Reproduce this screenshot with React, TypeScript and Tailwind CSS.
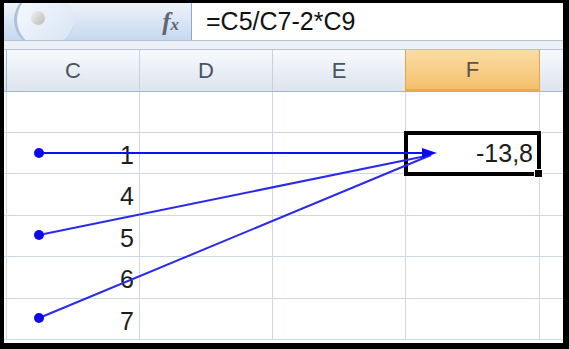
import React from 'react'

const rows = [
  { h: 'h-[41px]', c: '', f: '' },
  { h: 'h-[41px]', c: '1', f: '-13,8' },
  { h: 'h-[42px]', c: '4', f: '' },
  { h: 'h-[41px]', c: '5', f: '' },
  { h: 'h-[42px]', c: '6', f: '' },
  { h: 'h-[41px]', c: '7', f: '' },
]

function Arrows() {
  // trace precedents: all arrows end at one head inside F2
  const tip = { x: 433, y: 150 }
  const from = [
    { x: 35, y: 150 },
    { x: 35, y: 232 },
    { x: 35, y: 315 },
  ]
  return (
    <svg className="absolute left-0 top-0 pointer-events-none" width="559" height="340">
      {from.map((p, i) => (
        <g key={i}>
          <line
            x1={p.x}
            y1={p.y}
            x2={tip.x - 6}
            y2={tip.y + (i === 0 ? 0 : 2)}
            stroke={i === 0 ? '#1010f0' : '#2a2aee'}
            strokeWidth="2"
          />
          <circle cx={p.x} cy={p.y} r="5" fill="#0a0af0" />
        </g>
      ))}
      <polygon points={`${tip.x},${tip.y} ${tip.x - 15},${tip.y - 5} ${tip.x - 15},${tip.y + 5}`} fill="#0a0af0" />
    </svg>
  )
}

export default function App() {
  return (
    <div className="w-[569px] h-[349px] bg-black pt-[3px] pl-[4px] pr-[6px] pb-[6px]">
      <div className="relative w-full h-full bg-white flex flex-col overflow-hidden font-['Liberation_Sans',Arial,sans-serif]">
        {/* formula bar */}
        <div className="h-[37px] flex shrink-0">
          <div className="relative w-[188px] overflow-hidden bg-gradient-to-b from-[#eef3fa] to-[#c6d8ef] border-r border-[#8fa8c8] flex items-center justify-end pr-[12px]">
            <div className="absolute left-[10px] top-[-10px] w-[60px] h-[54px] rounded-full border-l-[3px] border-b border-[#aebfd6] bg-gradient-to-br from-[#f8fbff] to-[#d6e3f3]" />
            <div className="absolute left-[27px] top-[8px] w-[14px] h-[14px] rounded-full bg-gradient-to-br from-[#f2f2f2] to-[#b9b9b9]" />
            <span className="font-['Liberation_Serif',serif] italic font-bold text-[#5f6672] text-[25px] leading-none">
              f<span className="text-[17px]">x</span>
            </span>
          </div>
          <div className="flex-1 flex items-center pl-[14px] text-[25px] text-[#111]">=C5/C7-2*C9</div>
        </div>

        {/* strip */}
        <div className="h-[10px] shrink-0 border-t border-[#a2b5cd] bg-[#edf2f9] border-b border-[#b4c3d6]" />

        {/* column headers */}
        <div className="h-[42px] shrink-0 flex border-b border-[#9eb6ce] bg-gradient-to-b from-[#f8fafd] to-[#dce4ef] text-[22px] text-[#4a5361]">
          <div className="w-[3px] border-r border-[#9eb6ce]" />
          <div className="w-[133px] border-r border-[#c5d1df] flex items-center justify-center">C</div>
          <div className="w-[133px] border-r border-[#c5d1df] flex items-center justify-center">D</div>
          <div className="w-[133px] border-r border-[#e0a64c] flex items-center justify-center">E</div>
          <div className="w-[134px] border-r border-[#e0a64c] border-b-2 border-b-[#f0a94a] bg-gradient-to-b from-[#fbdca4] to-[#f5c06d] flex items-center justify-center text-[#5a5246]">
            F
          </div>
          <div className="flex-1" />
        </div>

        {/* cells */}
        <div className="flex flex-col text-[25px] text-[#1c1c1c]">
          {rows.map((r, i) => (
            <div key={i} className={`${r.h} flex border-b border-[#d0d7e5]`}>
              <div className="w-[3px] border-r border-[#d0d7e5]" />
              <div className="w-[133px] border-r border-[#d0d7e5] flex items-center justify-end pr-[5px] pt-[5px]">{r.c}</div>
              <div className="w-[133px] border-r border-[#d0d7e5]" />
              <div className="w-[133px] border-r border-[#d0d7e5]" />
              <div className="w-[134px] border-r border-[#d0d7e5] flex items-center justify-end pr-[6px] pt-[2px]">{r.f}</div>
              <div className="flex-1" />
            </div>
          ))}
        </div>

        {/* selected cell */}
        <div className="absolute left-[400px] top-[128px] w-[137px] h-[45px] border-[4px] border-black" />
        <div className="absolute left-[530px] top-[166px] w-[9px] h-[9px] bg-black border border-white" />

        <Arrows />
      </div>
    </div>
  )
}
